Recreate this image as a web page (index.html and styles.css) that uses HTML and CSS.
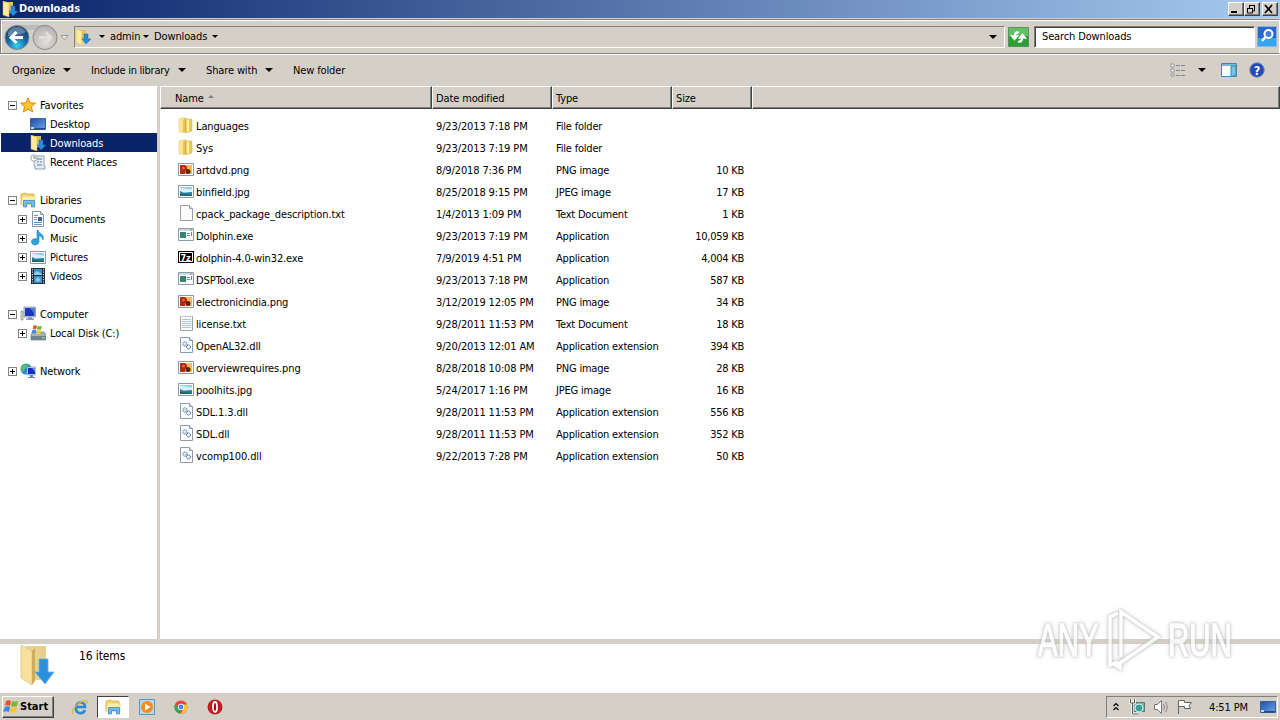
FILE: index.html
```html
<!DOCTYPE html>
<html lang="en">

<head>
  <meta charset="UTF-8">
  <meta name="viewport" content="width=device-width, initial-scale=1.0">
  <title>Downloads</title>
  <link rel="stylesheet" href="styles.css">
</head>

<body>

  <!-- icon sprite -->
  <svg class="sprite" width="0" height="0">
    <defs>
      <linearGradient id="gold" x1="0" x2="1"><stop offset="0" stop-color="#fff0a8"/><stop offset="1" stop-color="#e6c04a"/></linearGradient>
      <linearGradient id="blue" x1="0" x2="1" y1="0" y2="1"><stop offset="0" stop-color="#1c4fa8"/><stop offset="1" stop-color="#69a4ea"/></linearGradient>
      <radialGradient id="orb" cx=".5" cy=".85" r=".8"><stop offset="0" stop-color="#35d2f5"/><stop offset=".5" stop-color="#176ca8"/><stop offset="1" stop-color="#15395f"/></radialGradient>
      <radialGradient id="orb-off" cx=".5" cy=".7" r=".6"><stop offset="0" stop-color="#e0ddd8"/><stop offset="1" stop-color="#b9b8b6"/></radialGradient>
    </defs>
    <symbol id="folder" viewBox="0 0 16 16">
      <path d="M1 2l6-1.500 1 1.500h6v12l-6 2-7-1.500z" fill="url(#gold)" stroke="#dcc46e" stroke-width=".6"/>
      <path d="M7.500 1v14.500" stroke="#c79d2e" stroke-width=".8"/>
      <path d="M5 3l2-1v13l-2-.5z" fill="#e8c75a"/>
      <path d="M9 3h2v11l-2 1z" fill="#fdf0a0"/>
    </symbol>
    <symbol id="downloads" viewBox="0 0 16 16">
      <path d="M3 1h8v11H3z" fill="#e3bf5b"/>
      <path d="M1 0l6 2v14l-6-2z" fill="#ffe99b" stroke="#d9b552" stroke-width=".5"/>
      <path d="M9 5h4v5h3l-5 5-4-5h2z" fill="#268bdc" stroke="#1464b4" stroke-width=".5"/>
    </symbol>
    <symbol id="star" viewBox="0 0 16 16">
      <path d="M8 .8l2.100 5 5.400.4-4.100 3.500 1.300 5.300L8 12.200 3.300 15l1.300-5.300L.5 6.200l5.400-.4z" fill="#ffc62c" stroke="#e07b13" stroke-width=".9"/>
    </symbol>
    <symbol id="desktop" viewBox="0 0 16 16">
      <path d="M.5 2.500h15v11H.5z" fill="url(#blue)" stroke="#3d5f9c"/>
      <path d="M1 12h14v1.500H1z" fill="#274a86"/><path d="M1 11h3v2H1z" fill="#b9d5f2"/>
    </symbol>
    <symbol id="recent" viewBox="0 0 16 16">
      <path d="M4 2h10v10h1v3H5v-3H4z" fill="#e6ecf3" stroke="#7f8fa3" stroke-width=".8"/>
      <path d="M7 5h5M7 8h2M10 8h2M7 11h5" stroke="#5c7fae"/>
      <circle cx="4" cy="4" r="3.200" fill="#f6f8fa" stroke="#8b96a5" stroke-width=".8"/><path d="M4 2v2h2" fill="none" stroke="#445" stroke-width=".7"/>
    </symbol>
    <symbol id="library" viewBox="0 0 16 16">
      <path d="M1 2l5-1 1 1h7v10H1z" fill="#f3d677" stroke="#c9a336" stroke-width=".7"/><path d="M2 4h13v9H1z" fill="#ffeea2" stroke="#dabb55" stroke-width=".5"/>
      <path d="M3.500 15V8.500h11V15h-3v-3.500h-5V15z" fill="#6cc0ea" stroke="#2d7fbd" stroke-width=".7"/>
    </symbol>
    <symbol id="document" viewBox="0 0 16 16">
      <path d="M2.500.5h8l3 3v12h-11z" fill="#fff" stroke="#7f98b5"/><path d="M10.500.5v3h3" fill="none" stroke="#7f98b5"/>
      <path d="M4 4.500h4M4 6.500h3M4 11.500h8M4 13.500h8M4 8.500h3" stroke="#6e91bd"/><path d="M8 6h4v4H8z" fill="#35649f"/>
    </symbol>
    <symbol id="music" viewBox="0 0 16 16">
      <path d="M8 0c1 4 7 4 5 10-1-4-4-4-4-4v6a3.800 3.200 0 1 1-2-3V0z" fill="#2aa3e0" stroke="#1378b5" stroke-width=".5"/>
    </symbol>
    <symbol id="picture" viewBox="0 -1 16 16">
      <path d="M.5 1.500h15v12H.5z" fill="#fff" stroke="#8799a9"/><path d="M2 3h12v9H2z" fill="#8fd0f1"/>
      <path d="M2 4c3-1 7 2 12 1v3H2z" fill="#d9f0fb"/><path d="M2 7l4 2 8-1v4H2z" fill="#2b7f9c"/><path d="M2 10l12 1v1H2z" fill="#23605c"/>
    </symbol>
    <symbol id="video" viewBox="0 0 16 16">
      <path d="M1 0h14v16H1z" fill="#222d3b"/><path d="M4 1h8v6H4zM4 8h8v7H4z" fill="#3b93c8"/>
      <path d="M2.500 1v15M13.500 1v15" stroke="#dce6ef" stroke-dasharray="1.200 1.300"/><path d="M4 5l3-2 5 3v1H4zM5 12l3-3 3 3-3 2z" fill="#8ccdec"/>
    </symbol>
    <symbol id="computer" viewBox="0 0 16 16">
      <path d="M4 1h11.500v10H4z" fill="#d3d9e6" stroke="#8290ad" stroke-width=".8"/><path d="M5 2h9.500v8H5z" fill="#1d35bd"/><path d="M10 2h4.500v6z" fill="#4f74e2"/>
      <path d="M8 11h4v2H8zM6 12.500h8V14H6z" fill="#8d9ab0"/><path d="M1 5h2v9H1z" fill="#d8e0d0" stroke="#79906b" stroke-width=".7"/>
    </symbol>
    <symbol id="disk" viewBox="0 0 16 16">
      <path d="M1 10l2-3h11l2 3v5H1z" fill="#a5b4bd" stroke="#657983" stroke-width=".7"/><path d="M1 11h15v4H1z" fill="#6d858f"/><path d="M12 13h3" stroke="#7cf06c"/>
      <use href="#flag" x="1" y="0" width="12" height="10"/>
    </symbol>
    <symbol id="flag" viewBox="0 0 16 14">
      <path d="M3 1c2-1 3-1 5 0L7 6C5 5 4 5 2 6z" fill="#e9532a"/><path d="M9 1c2 1 4 1 6 0l-1 5c-2 1-4 1-6 0z" fill="#7ab733"/>
      <path d="M2 7c2-1 3-1 5 0l-1 5c-2-1-4-1-6 0z" fill="#3888dc"/><path d="M8 7c2 1 4 1 6 0l-1 5c-2 1-4 1-6 0z" fill="#fac52d"/>
    </symbol>
    <symbol id="network" viewBox="0 0 16 16">
      <circle cx="6" cy="6" r="5.500" fill="#258dc3"/><path d="M2 3c3-3 5-2 6 0L5 6 3 9C1 8 0 6 2 3z" fill="#59bd70"/>
      <path d="M7 4h9v8H7z" fill="#cbd5e7" stroke="#7c8dae" stroke-width=".6"/><path d="M8 5h7v6H8z" fill="#182fbd"/><path d="M12 5h3v4z" fill="#678de9"/><path d="M10 12h3v2h2v1H8v-1h2z" fill="#7484a4"/>
    </symbol>
    <symbol id="png" viewBox="0 -1 16 16">
      <path d="M.5 1.500h15v12H.5z" fill="#fff" stroke="#8799a9"/><path d="M2 3h12v9H2z" fill="#f6b866"/>
      <path d="M2 3h5l2 2v3L7 9v3H2z" fill="#b52a0d"/><circle cx="5.500" cy="6" r="1.300" fill="#ef6a2b"/><path d="M9 8h5v4H9z" fill="#f7c51f"/><circle cx="10" cy="9.500" r="2.500" fill="#592510"/>
    </symbol>
    <symbol id="text-blank" viewBox="0 0 16 16">
      <path d="M2.500.5h9l3 3v12h-12z" fill="#fbfbfb" stroke="#9c9c9c"/><path d="M11.500.5v3h3" fill="#e7e7e7" stroke="#9c9c9c"/>
    </symbol>
    <symbol id="text" viewBox="0 0 16 16">
      <path d="M2.500 1.500h12v14h-12z" fill="#fafcfc" stroke="#9ba5a6"/><path d="M3 1.500h11" stroke="#fff" stroke-dasharray="1 1.500"/>
      <path d="M4 4.500h9M4 6.500h9M4 8.500h9M4 10.500h9M4 12.500h9" stroke="#b5c7ce"/>
    </symbol>
    <symbol id="app" viewBox="0 0 16 16">
      <path d="M.5 1.500h15v12H.5z" fill="#fff" stroke="#8a9aac"/><path d="M1 2h14v2H1z" fill="#ccd9e5"/><path d="M2 5h6v6H2z" fill="#34866c"/>
      <path d="M9 6.500h3M9 8.500h3M13.500 5v4" stroke="#65869c"/><path d="M12 3h2" stroke="#d66b5a"/>
    </symbol>
    <symbol id="dll" viewBox="0 0 16 16">
      <path d="M2.500.5h9l3 3v12h-12z" fill="#fbfdff" stroke="#8d9baa"/><path d="M11.500.5v3h3" fill="#dce5ef" stroke="#8d9baa"/>
      <circle cx="7" cy="7" r="2.200" fill="#d5e5f4" stroke="#5579a8" stroke-dasharray="1.200 .5"/><circle cx="10.500" cy="10" r="2" fill="#e9f2fb" stroke="#37598b" stroke-dasharray="1.200 .5"/>
    </symbol>
  </svg>

  <header class="title-bar">
    <svg class="icon"><use href="#downloads"/></svg>
    <h1>Downloads</h1>
    <div class="window-buttons">
      <button><svg width="12" height="10"><path d="M2 8h6" stroke="#000" stroke-width="2"/></svg></button>
      <button><svg width="12" height="10"><path d="M4 1.500h6M9.500 1v6H8M4.500 1v3M2 4.500h6M2.500 4v5h5V4" fill="none" stroke="#000"/></svg></button>
      <button class="close"><svg width="12" height="10"><path d="M2 1l7 8M9 1L2 9" stroke="#000" stroke-width="1.700"/></svg></button>
    </div>
  </header>

  <nav class="nav-bar">
    <svg class="orbs" width="70" height="30" viewBox="0 0 70 30">
      <path d="M17 3h28v5H17z" fill="#b8bcc0"/>
      <circle cx="16" cy="15.500" r="12" fill="url(#orb)" stroke="#7c8a96"/>
      <path d="M7 10c4-7 14-7 18 0-5 3-12 3-18 4z" fill="#fff" opacity=".3"/>
      <path d="M22 15.500H11M15.500 10L10 15.500l5.500 5.500" fill="none" stroke="#fff" stroke-width="3"/>
      <circle cx="44" cy="15.500" r="12" fill="url(#orb-off)" stroke="#87898c"/>
      <path d="M38 15.500h11M45 10.500l5 5-5 5" fill="none" stroke="#e3e1dd" stroke-width="2.500"/>
      <path d="M60 13.500h7l-3.500 4z" fill="#eee" stroke="#8b8984" stroke-width=".8"/>
    </svg>
    <div class="address">
      <svg class="icon"><use href="#downloads"/></svg>
      <i class="arrow small"></i><span class="crumb-admin">admin</span>
      <i class="arrow small"></i><span class="crumb-downloads">Downloads</span>
      <i class="arrow small"></i>
      <i class="arrow history"></i>
    </div>
    <svg class="refresh" width="21" height="20" viewBox="0 0 21 20">
      <path d="M.5.5h20v19H.5z" fill="#2c9f34" stroke="#5c9062"/><path d="M1 1h19v8H1z" fill="#62c065"/>
      <path d="M11 5.500C8 4 6.500 6 6.500 9M3.500 9l3 3.500 3-3.500zM10 14.500c3 1.500 4.500-.5 4.500-3.500M11.500 11l3-3.500 3 3.500z" fill="#fff" stroke="#fff" stroke-width="1.500"/>
    </svg>
    <div class="search">Search Downloads</div>
    <svg class="search-button" width="20" height="21" viewBox="0 0 20 21">
      <path d="M.5.5h19v20H.5z" fill="#2868cb" stroke="#8eb3e5"/><path d="M1 12h18v8H1z" fill="#32a5ed"/>
      <circle cx="11.500" cy="8" r="4" fill="#477ed8" stroke="#fff" stroke-width="2"/><path d="M8.500 11L5 15" stroke="#fff" stroke-width="2.500"/>
    </svg>
  </nav>

  <div class="toolbar">
    <span class="organize">Organize</span><i class="arrow"></i>
    <span class="include">Include in library</span><i class="arrow"></i>
    <span class="share">Share with</span><i class="arrow"></i>
    <span class="new-folder">New folder</span>
    <div class="view-tools">
      <svg width="16" height="14"><path d="M1 1h3v3H1zM1 6h3v3H1zM1 11h3v2H1z" fill="#fff" stroke="#79838c" stroke-width=".8"/><path d="M6 2.500h4M11 2.500h4M6 7.500h4M11 7.500h4M6 12.500h4M11 12.500h4" stroke="#7e8790"/></svg>
      <i class="arrow"></i>
      <svg class="preview" width="16" height="14"><path d="M.5.500h15v13H.5z" fill="#fff" stroke="#4285aa"/><path d="M1 1h14v2H1z" fill="#75b9d8"/><path d="M10 3h5v10h-5z" fill="#75c3e5" stroke="#4285aa"/></svg>
      <svg class="help" width="16" height="16"><circle cx="8" cy="8" r="7.300" fill="#264bb5" stroke="#8293bb"/><text x="8" y="12.500" text-anchor="middle">?</text></svg>
    </div>
  </div>

  <main>
    <aside>
      <ul class="tree">
        <li><i class="box"></i><svg class="icon"><use href="#star"/></svg>Favorites</li>
        <li class="child"><svg class="icon"><use href="#desktop"/></svg>Desktop</li>
        <li class="child selected"><svg class="icon"><use href="#downloads"/></svg>Downloads</li>
        <li class="child"><svg class="icon"><use href="#recent"/></svg>Recent Places</li>
      </ul>
      <ul class="tree">
        <li><i class="box"></i><svg class="icon"><use href="#library"/></svg>Libraries</li>
        <li class="child"><i class="box plus"></i><svg class="icon"><use href="#document"/></svg>Documents</li>
        <li class="child"><i class="box plus"></i><svg class="icon"><use href="#music"/></svg>Music</li>
        <li class="child"><i class="box plus"></i><svg class="icon"><use href="#picture"/></svg>Pictures</li>
        <li class="child"><i class="box plus"></i><svg class="icon"><use href="#video"/></svg>Videos</li>
      </ul>
      <ul class="tree">
        <li><i class="box"></i><svg class="icon"><use href="#computer"/></svg>Computer</li>
        <li class="child"><i class="box plus"></i><svg class="icon"><use href="#disk"/></svg>Local Disk (C:)</li>
      </ul>
      <ul class="tree">
        <li><i class="box plus"></i><svg class="icon"><use href="#network"/></svg>Network</li>
      </ul>
    </aside>

    <section class="files">
      <div class="columns">
        <span class="name">Name <i class="sort"></i></span><span>Date modified</span><span>Type</span><span>Size</span><span></span>
      </div>
      <div class="rows">
        <div class="row"><svg class="icon"><use href="#folder"/></svg><span>Languages</span><span>9/23/2013 7:18 PM</span><span class="type">File folder</span><span class="size"></span></div>
        <div class="row"><svg class="icon"><use href="#folder"/></svg><span>Sys</span><span>9/23/2013 7:19 PM</span><span class="type">File folder</span><span class="size"></span></div>
        <div class="row"><svg class="icon"><use href="#png"/></svg><span>artdvd.png</span><span>8/9/2018 7:36 PM</span><span class="type">PNG image</span><span class="size">10 KB</span></div>
        <div class="row"><svg class="icon"><use href="#picture"/></svg><span>binfield.jpg</span><span>8/25/2018 9:15 PM</span><span class="type">JPEG image</span><span class="size">17 KB</span></div>
        <div class="row"><svg class="icon"><use href="#text-blank"/></svg><span>cpack_package_description.txt</span><span>1/4/2013 1:09 PM</span><span class="type">Text Document</span><span class="size">1 KB</span></div>
        <div class="row"><svg class="icon"><use href="#app"/></svg><span>Dolphin.exe</span><span>9/23/2013 7:19 PM</span><span class="type">Application</span><span class="size">10,059 KB</span></div>
        <div class="row"><svg class="icon"><path d="M0 2h16v12H0z" fill="#000"/><path d="M1.500 3.500h13v9h-13z" fill="none" stroke="#fff"/><text class="seven" x="2.500" y="11.500">7z</text></svg><span>dolphin-4.0-win32.exe</span><span>7/9/2019 4:51 PM</span><span class="type">Application</span><span class="size">4,004 KB</span></div>
        <div class="row"><svg class="icon"><use href="#app"/></svg><span>DSPTool.exe</span><span>9/23/2013 7:18 PM</span><span class="type">Application</span><span class="size">587 KB</span></div>
        <div class="row"><svg class="icon"><use href="#png"/></svg><span>electronicindia.png</span><span>3/12/2019 12:05 PM</span><span class="type">PNG image</span><span class="size">34 KB</span></div>
        <div class="row"><svg class="icon"><use href="#text"/></svg><span>license.txt</span><span>9/28/2011 11:53 PM</span><span class="type">Text Document</span><span class="size">18 KB</span></div>
        <div class="row"><svg class="icon"><use href="#dll"/></svg><span>OpenAL32.dll</span><span>9/20/2013 12:01 AM</span><span class="type">Application extension</span><span class="size">394 KB</span></div>
        <div class="row"><svg class="icon"><use href="#png"/></svg><span>overviewrequires.png</span><span>8/28/2018 10:08 PM</span><span class="type">PNG image</span><span class="size">28 KB</span></div>
        <div class="row"><svg class="icon"><use href="#picture"/></svg><span>poolhits.jpg</span><span>5/24/2017 1:16 PM</span><span class="type">JPEG image</span><span class="size">16 KB</span></div>
        <div class="row"><svg class="icon"><use href="#dll"/></svg><span>SDL.1.3.dll</span><span>9/28/2011 11:53 PM</span><span class="type">Application extension</span><span class="size">556 KB</span></div>
        <div class="row"><svg class="icon"><use href="#dll"/></svg><span>SDL.dll</span><span>9/28/2011 11:53 PM</span><span class="type">Application extension</span><span class="size">352 KB</span></div>
        <div class="row"><svg class="icon"><use href="#dll"/></svg><span>vcomp100.dll</span><span>9/22/2013 7:28 PM</span><span class="type">Application extension</span><span class="size">50 KB</span></div>
      </div>
    </section>
  </main>

  <section class="details">
    <svg width="36" height="42" viewBox="0 0 36 42">
      <path d="M6 2h20v34H6z" fill="#e9d08c"/><path d="M1 1l11 6v34L1 34z" fill="#f8e09a" stroke="#e0c279" stroke-width=".7"/><path d="M12 7l3-3v33l-3 4z" fill="#d0ab58"/>
      <path d="M19 15h9v13h6L25 40 15 28h4z" fill="#2b91df" stroke="#68b4ec" stroke-width=".8"/>
    </svg>
    <span>16 items</span>
  </section>

  <footer class="taskbar">
    <button class="start"><svg width="16" height="14"><use href="#flag"/></svg>Start</button>
    <div class="task"><svg width="18" height="16" viewBox="0 0 18 16"><path d="M14 11c-2 5-10 4-9-3 1-6 9-6 9 0H5" fill="none" stroke="#268bda" stroke-width="2.600"/><path d="M2 15C-2 12 10 0 16 2c1 1 0 2-1 3" fill="none" stroke="#e8b62e" stroke-width="1.300"/></svg></div>
    <div class="task active"><svg class="icon"><use href="#library"/></svg></div>
    <div class="task"><svg width="16" height="16"><path d="M.5.500h15v15H.5z" fill="#b3d8f5" stroke="#5994cc"/><circle cx="8" cy="8" r="6" fill="#f48c17"/><path d="M6 4.500v7L11.500 8z" fill="#fff"/></svg></div>
    <div class="task"><svg width="14" height="14" viewBox="0 0 16 16"><circle cx="8" cy="8" r="7.500" fill="#e64435"/><path d="M1.500 4.200L6 11l2 4.500A7.500 7.500 0 0 1 1.500 4.200z" fill="#35a853"/><path d="M8 15.500L11 9l-1-4h4.900A7.500 7.500 0 0 1 8 15.500z" fill="#fbc72c"/><circle cx="8" cy="8" r="3.600" fill="#fff"/><circle cx="8" cy="8" r="2.800" fill="#4386f4"/></svg></div>
    <div class="task"><svg width="16" height="16"><circle cx="8" cy="8" r="7.500" fill="#c21b22"/><ellipse cx="8" cy="8" rx="2" ry="5" fill="#a30f17" stroke="#fff" stroke-width="1.800"/></svg></div>
    <div class="tray">
      <svg class="chevron" width="8" height="10"><path d="M1.500 4L4 1.500 6.500 4M1.500 8L4 5.500 6.500 8" fill="none" stroke="#000" stroke-width="1.200"/></svg>
      <svg class="net" width="17" height="16"><path d="M4.500 3.500h11v9h-11z" fill="#67b6b0" stroke="#63737a"/><circle cx="10" cy="9" r="4" fill="#37a198" stroke="#d9f2ed"/><path d="M1.500 0v4h4V0M3.500 4v11h6" fill="none" stroke="#fff" stroke-width="2.500"/><path d="M1.500 0v4h4V0M3.500 4v11h6" fill="none" stroke="#555"/></svg>
      <svg class="sound" width="17" height="16"><path d="M1.500 5.500h3l4-4v13l-4-4h-3z" fill="#fff" stroke="#777"/><path d="M10.500 5q2 3 0 6M12.500 3q3.500 5 0 10" fill="none" stroke="#888"/></svg>
      <svg class="alert" width="17" height="16"><path d="M1.500 15V1.500h6v2h7l-2.500 3 1.500 3H7.500v-2h-6" fill="#fff" stroke="#666"/></svg>
      <span class="clock">4:51 PM</span>
      <svg class="icon"><use href="#desktop"/></svg>
    </div>
  </footer>

  <div class="watermark">
    <span>ANY</span>
    <svg width="60" height="66" viewBox="0 0 60 66"><path d="M14 55L6 58V10l8-4M17 50V5l37 25-38 26v5l-6-4" fill="none" stroke="#fff" stroke-width="3.500"/></svg>
    <span>RUN</span>
  </div>

</body>

</html>
```
FILE: styles.css
```css
* {
  box-sizing: border-box;
}

body {
  margin: 0;
  width: 1280px;
  height: 720px;
  overflow: hidden;
  display: flex;
  flex-direction: column;
  background: #d4d0c8;
  color: #000;
  font-family: "DejaVu Sans Condensed", "DejaVu Sans", sans-serif;
  font-stretch: condensed;
  font-size: 11px;
  letter-spacing: -0.13px;
  line-height: 14px;
  white-space: nowrap;
}

svg {
  display: block;
  flex: none;
}

.sprite {
  position: absolute;
}

.icon {
  width: 16px;
  height: 16px;
}

.seven {
  fill: #fff;
  font-size: 9px;
  font-weight: bold;
}

button {
  padding: 0;
  font: inherit;
  background: #d4d0c8;
  border: 1px solid;
  border-color: #fff #404040 #404040 #fff;
  box-shadow: inset -1px -1px #808080;
}

/* Title bar */
.title-bar {
  height: 18px;
  flex: none;
  display: flex;
  align-items: center;
  padding: 0 2px;
  background: linear-gradient(90deg, #0a246a, #a6caf0);
}

.title-bar h1 {
  margin: 0 0 0 1px;
  font-size: 11px;
  letter-spacing: 0;
  color: #fff;
}

.window-buttons {
  display: flex;
  margin-left: auto;
}

.window-buttons button {
  width: 16px;
  height: 14px;
}

.window-buttons .close {
  margin-left: 2px;
}

/* Navigation */
.nav-bar {
  height: 35px;
  flex: none;
  display: flex;
  align-items: center;
  margin-top: 1px;
  border: 1px solid #808080;
  border-right-color: #fff;
  box-shadow: inset 1px 1px #fff;
}

.orbs {
  margin-right: 3px;
}

.address {
  width: 931px;
  height: 22px;
  display: flex;
  align-items: center;
  border: 1px solid;
  border-color: #808080 #fff #fff #808080;
}

.arrow {
  flex: none;
  width: 0;
  height: 0;
  border: 4px solid transparent;
  border-top-color: #000;
  border-bottom: 0;
}

.arrow.small {
  border-width: 3px 3px 0;
  margin: 0 5px 0 8px;
}

.address span + .arrow.small {
  margin-left: 0;
}

.crumb-admin {
  width: 33px;
}

.crumb-downloads {
  width: 58px;
}

.arrow.history {
  margin: 0 7px 0 auto;
}

.refresh {
  margin-left: 3px;
}

.search {
  width: 221px;
  height: 22px;
  margin: 0 2px 0 5px;
  padding: 3px 7px;
  background: #fff;
  border: 1px solid;
  border-color: #808080 #fff #fff #808080;
  box-shadow: inset 1px 1px #404040;
}

/* Command bar */
.toolbar {
  height: 32px;
  flex: none;
  display: flex;
  align-items: center;
  padding: 0 15px 2px 12px;
  border-top: 1px solid #fff;
}

.toolbar > span {
  padding-top: 2px;
}

.organize {
  width: 51px;
}

.include {
  width: 87px;
  margin-left: 20px;
  letter-spacing: -0.25px;
}

.share {
  width: 59px;
  margin-left: 20px;
}

.new-folder {
  margin-left: 20px;
}

.view-tools {
  display: flex;
  align-items: center;
  margin-left: auto;
}

.view-tools .arrow {
  margin: 0 15px 0 12px;
}

.help {
  margin-left: 12px;
}

.help text {
  fill: #fff;
  font-size: 12px;
  font-weight: bold;
}

/* Explorer panes */
main {
  flex: 1;
  display: flex;
  min-height: 0;
}

aside {
  width: 157px;
  padding-top: 9px;
  background: #fff;
}

.tree {
  list-style: none;
  margin: 0 0 19px;
  padding: 0;
}

.tree li {
  height: 19px;
  display: flex;
  align-items: center;
  padding: 2px 0 0 8px;
}

.tree li .icon {
  margin: -2px 4px 0 3px;
}

.tree .child {
  padding-left: 18px;
}

.tree .child > .icon:first-child {
  margin-left: 12px;
}

.tree .selected {
  margin-left: 1px;
  padding-left: 17px;
  background: #0a246a;
  color: #fff;
}

.box {
  width: 9px;
  height: 9px;
  border: 1px solid #848484;
  background: linear-gradient(#000, #000) center / 5px 1px no-repeat;
}

.box.plus {
  background: linear-gradient(#000, #000) center / 5px 1px no-repeat, linear-gradient(#000, #000) center / 1px 5px no-repeat;
}

.files {
  flex: 1;
  margin-left: 3px;
  background: #fff;
}

.columns {
  height: 23px;
  display: grid;
  grid-template-columns: 272px 120px 120px 80px 1fr;
  grid-template-rows: 23px;
  background: #d4d0c8;
}

.columns span {
  padding: 5px 3px 2px;
  border: 1px solid;
  border-color: #fff #404040 #404040 #fff;
  box-shadow: inset -1px -1px #808080;
}

.columns .name {
  padding-left: 14px;
}

.sort {
  display: inline-block;
  margin: 0 0 4px 1px;
  border: 3px solid transparent;
  border-bottom-color: #808080;
  border-top: 0;
}

.rows {
  padding-top: 6px;
}

.row {
  height: 22px;
  display: grid;
  grid-template-columns: 18px 240px 120px 119px 69px;
  align-items: center;
  padding-left: 18px;
}

.row .icon {
  margin-top: -2px;
}

.row span {
  padding-top: 2px;
}

.row .type {
  letter-spacing: -0.2px;
}

.row .size {
  text-align: right;
  letter-spacing: -0.25px;
}

/* Details */
.details {
  height: 48px;
  flex: none;
  display: flex;
  margin-top: 5px;
  padding-left: 20px;
  background: #fff;
  font-size: 12px;
}

.details span {
  margin: 5px 0 0 23px;
}

/* Taskbar */
.taskbar {
  height: 28px;
  flex: none;
  display: flex;
  align-items: center;
  border-top: 1px solid #fff;
  padding: 1px 2px 0;
}

.start {
  width: 52px;
  height: 22px;
  display: flex;
  align-items: center;
  gap: 1px;
  padding-left: 0;
  margin-right: 9px;
  font-size: 11px;
  font-weight: bold;
}

.task {
  width: 33px;
  height: 22px;
  display: flex;
  align-items: center;
  justify-content: center;
  margin-right: 1px;
}

.task.active {
  width: 32px;
  background: #fff;
  border: 1px solid;
  border-color: #404040 #fff #fff #404040;
}

.tray {
  width: 172px;
  height: 22px;
  display: flex;
  align-items: center;
  margin-left: auto;
  padding: 0 1px 0 5px;
  border: 1px solid;
  border-color: #808080 #fff #fff #808080;
}

.net {
  margin-left: 9px;
}

.sound,
.alert {
  margin-left: 7px;
}

.clock {
  margin: 2px auto 0 15px;
}

/* Logo over the lower right corner */
.watermark {
  position: absolute;
  left: 1038px;
  top: 607px;
  height: 66px;
  display: flex;
  align-items: center;
  color: #fff;
  font-family: "Liberation Sans", Arial, sans-serif;
  font-size: 46px;
  letter-spacing: 0;
  line-height: 66px;
  -webkit-text-stroke: 1.5px #fff;
  filter: drop-shadow(0 0 1px #aaa) drop-shadow(0 0 2px #ccc);
  opacity: 0.8;
}

.watermark span {
  display: block;
  width: 66px;
  transform: scaleX(0.64);
  transform-origin: left;
}

.watermark svg {
  margin: 0 4px 0 0;
}
```
